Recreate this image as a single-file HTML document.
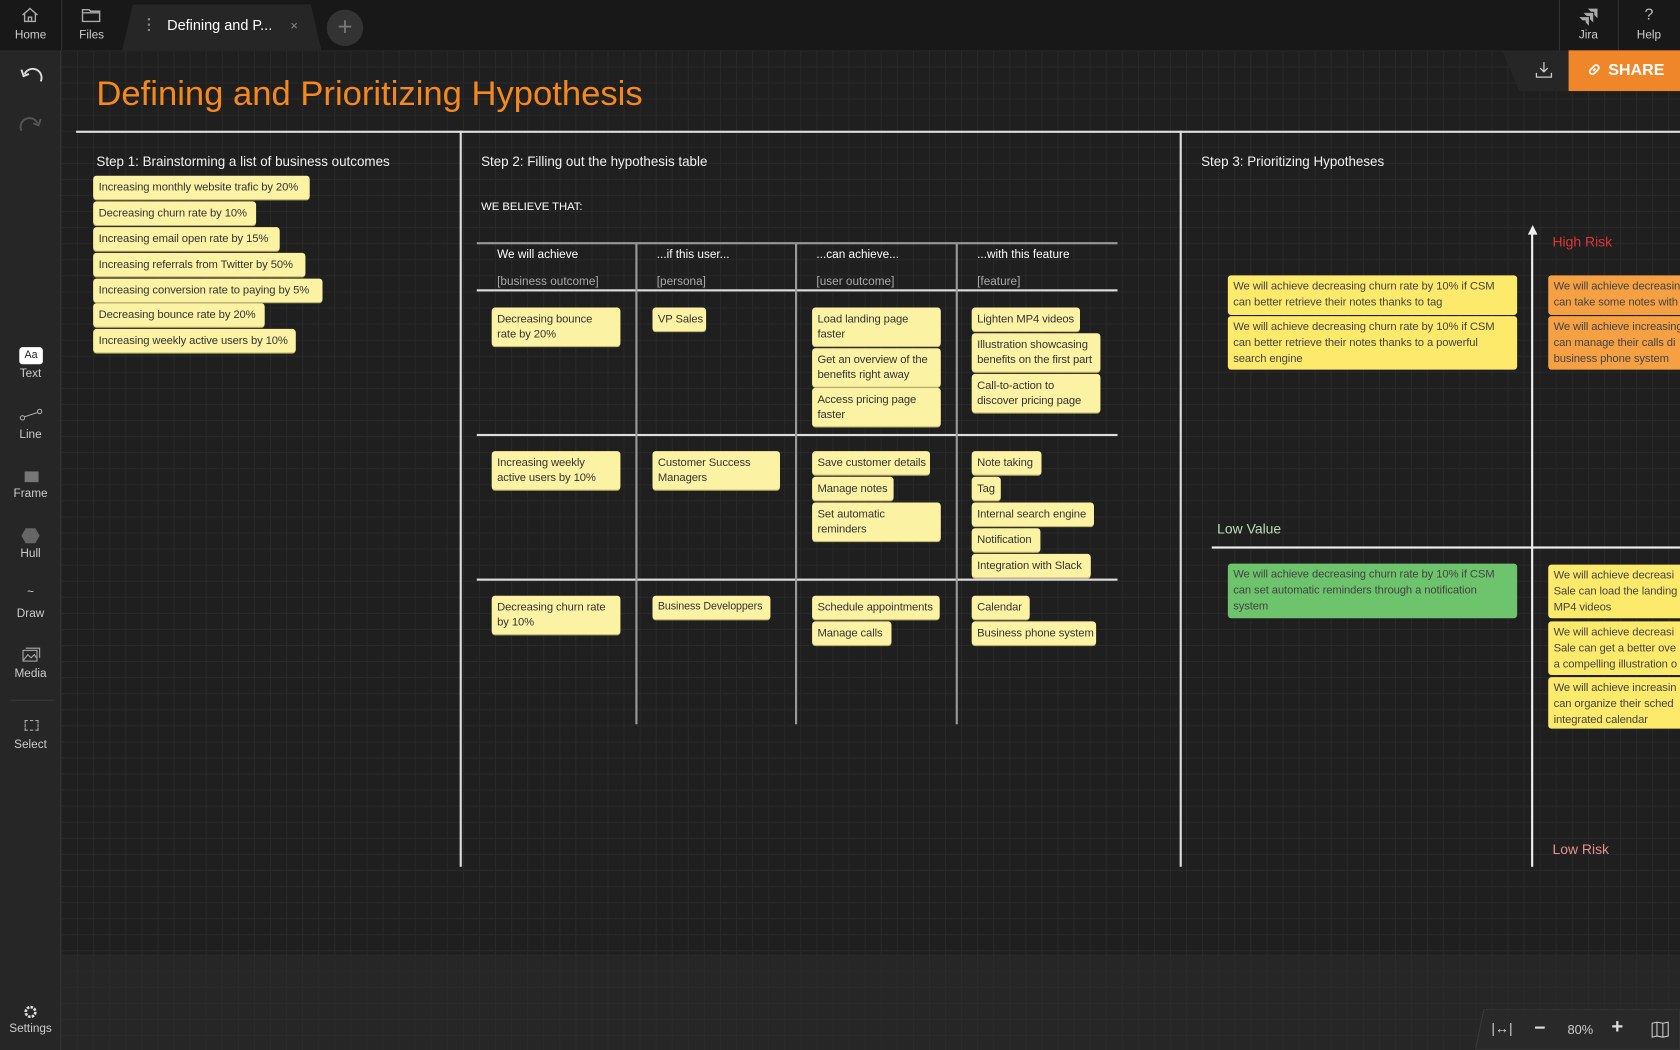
<!DOCTYPE html>
<html><head><meta charset="utf-8"><style>
*{margin:0;padding:0;box-sizing:border-box}
html,body{width:1680px;height:1050px;overflow:hidden;background:#1e1e1e;font-family:"Liberation Sans",sans-serif}
#w{position:absolute;left:0;top:0;width:1568px;height:980px;transform:scale(1.071429);transform-origin:0 0;overflow:hidden}
.a{position:absolute}
#canvas{left:57px;top:47px;width:1511px;height:844px;background-color:#1f1f1f;background-image:linear-gradient(#292929 1px,transparent 1px),linear-gradient(90deg,#292929 1px,transparent 1px);background-size:15px 15px}
#lower{left:57px;top:891px;width:1511px;height:89px;background-color:#262626;background-image:linear-gradient(#2a2a2a 1px,transparent 1px),linear-gradient(90deg,#2a2a2a 1px,transparent 1px);background-size:15px 15px}
#top{left:0;top:0;width:1568px;height:47px;background:#181818}
#side{left:0;top:47px;width:57px;height:933px;background:#262626;border-right:1px solid #333}
.lbl{position:absolute;width:57px;text-align:center;color:#ccc;font-size:11px}
.st{position:absolute;background:#fcf2a3;color:#333;font-size:10.5px;letter-spacing:-0.1px;line-height:14px;padding:4px 5px;border-radius:3px;box-shadow:0 1px 0 #b8ae6a;white-space:nowrap;overflow:hidden}
.h{position:absolute;color:#f2f2f2;font-size:12.5px}
.hl{position:absolute;height:2px;background:#ddd}
.vl{position:absolute;width:2px;background:#ddd}
.q{position:absolute;font-size:10.5px;letter-spacing:-0.1px;line-height:15px;color:#444;padding:3px 5px;border-radius:3px;width:270px;overflow:hidden;white-space:nowrap}
.y{background:#fde96a}.o{background:#f5a043}.g{background:#6dc46d}
.th{position:absolute;color:#fff;font-size:11px}
.ts{position:absolute;color:#aaa;font-size:11px}
</style></head><body><div id="w">
<div id="canvas" class="a"></div>
<div id="lower" class="a"></div>
<div id="top" class="a"></div>
<div id="side" class="a"></div>

<svg class="a" style="left:19px;top:6px" width="18" height="16" viewBox="0 0 18 16"><path d="M2 8 L9 2 L16 8 M4 6.5 V14 H14 V6.5 M7.5 14 V10 H10.5 V14" fill="none" stroke="#aaa" stroke-width="1.3"/></svg>
<div class="lbl" style="top:27px;left:0">Home</div>
<div class="a" style="left:57px;top:0;width:1px;height:47px;background:#333"></div>
<svg class="a" style="left:76px;top:7px" width="18" height="14" viewBox="0 0 18 14"><path d="M1 2 H7 L8.5 3.5 H17 V13 H1 Z M1 5 H17" fill="none" stroke="#aaa" stroke-width="1.3"/></svg>
<div class="lbl" style="top:27px;left:57px">Files</div>
<svg class="a" style="left:114px;top:4px" width="186" height="43"><path d="M10 0 H176 L186 43 H0 Z" fill="#262626"/></svg>
<div class="a" style="left:138px;top:17px;width:2px;height:2px;background:#888;box-shadow:0 5px 0 #888,0 10px 0 #888"></div>
<div class="a" style="left:156px;top:16px;color:#fff;font-size:13.5px">Defining and P...</div>
<div class="a" style="left:271px;top:17px;color:#888;font-size:12px">×</div>
<div class="a" style="left:305px;top:9px;width:34px;height:34px;border-radius:50%;background:#333;color:#777;font-size:24px;line-height:33px;text-align:center">+</div>
<div class="a" style="left:1455px;top:0;width:1px;height:47px;background:#333"></div>
<div class="a" style="left:1510px;top:0;width:1px;height:47px;background:#333"></div>
<svg class="a" style="left:1474px;top:7px" width="18" height="17" viewBox="0 0 18 17"><path d="M8 1 H17 V10 L14 7 V4 H11 Z M4 5 H13 V14 L10 11 V8 H7 Z M0 9 H9 V17 L6 14 V12 H3 Z" fill="#aaa"/></svg>
<div class="a" style="left:1455px;top:27px;width:55px;text-align:center;color:#ccc;font-size:11px">Jira</div>
<div class="a" style="left:1510px;top:5px;width:58px;text-align:center;color:#bbb;font-size:15px">?</div>
<div class="a" style="left:1510px;top:27px;width:58px;text-align:center;color:#ccc;font-size:11px">Help</div>

<svg class="a" style="left:1402px;top:47px" width="62" height="38"><path d="M0 0 H62 V38 H16 Z" fill="#262626"/></svg>
<svg class="a" style="left:1433px;top:57px" width="16" height="16" viewBox="0 0 16 16"><path d="M8 1 V10 M4.5 6.5 L8 10 L11.5 6.5 M1 11 V15 H15 V11" fill="none" stroke="#ccc" stroke-width="1.2"/></svg>
<div class="a" style="left:1464px;top:47px;width:104px;height:38px;background:#f0862a;color:#fff;font-weight:bold;font-size:15px;line-height:38px;padding-left:37px">SHARE</div>
<svg class="a" style="left:1481px;top:58px" width="14" height="14" viewBox="0 0 14 14"><path d="M6 8 L8 6 M5 5.5 L7 3.5 A2.2 2.2 0 0 1 10.5 7 L8.5 9 M9 8.5 L7 10.5 A2.2 2.2 0 0 1 3.5 7 L5.5 5" fill="none" stroke="#fff" stroke-width="1.6"/></svg>

<svg class="a" style="left:18px;top:62px" width="22" height="16" viewBox="0 0 22 16"><path d="M20 14 A8 8 0 0 0 5 7 M2 3 L4 9 L9 7" fill="none" stroke="#ddd" stroke-width="1.8"/></svg>
<svg class="a" style="left:18px;top:108px" width="22" height="16" viewBox="0 0 22 16"><path d="M2 14 A8 8 0 0 1 17 7 M20 3 L18 9 L13 7" fill="none" stroke="#555" stroke-width="1.8"/></svg>
<div class="a" style="left:18px;top:324px;width:22px;height:16px;background:#fff;border-radius:3px;color:#222;font-size:10px;line-height:16px;text-align:center">Aa</div>
<div class="lbl" style="top:343px">Text</div>
<svg class="a" style="left:18px;top:381px" width="22" height="12"><circle cx="3" cy="9" r="2" fill="none" stroke="#aaa"/><circle cx="19" cy="3" r="2" fill="none" stroke="#aaa"/><path d="M5 8 L17 4" stroke="#aaa"/></svg>
<div class="lbl" style="top:400px">Line</div>
<div class="a" style="left:23px;top:440px;width:13px;height:10px;background:#777"></div>
<div class="lbl" style="top:455px">Frame</div>
<svg class="a" style="left:20px;top:492px" width="17" height="16"><path d="M4 1 H13 L17 8 L13 15 H4 L0 8 Z" fill="#666"/></svg>
<div class="lbl" style="top:511px">Hull</div>
<div class="a" style="left:0;top:547px;width:57px;text-align:center;color:#ccc;font-size:11px">~</div>
<div class="lbl" style="top:567px">Draw</div>
<svg class="a" style="left:21px;top:604px" width="17" height="14"><rect x="0.5" y="3" width="13" height="10" fill="none" stroke="#aaa"/><path d="M3 1 H16 V10" fill="none" stroke="#aaa"/><path d="M1 12 L5 7 L8 10 L11 7 L13 10" fill="none" stroke="#aaa"/></svg>
<div class="lbl" style="top:623px">Media</div>
<div class="a" style="left:10px;top:653px;width:40px;height:1px;background:#3a3a3a"></div>
<div class="a" style="left:23px;top:672px;width:13px;height:10px;border:1px dashed #aaa"></div>
<div class="lbl" style="top:689px">Select</div>
<svg class="a" style="left:21px;top:937px" width="15" height="15" viewBox="0 0 15 15"><circle cx="7.5" cy="7.5" r="4.5" fill="none" stroke="#ddd" stroke-width="2.5" stroke-dasharray="2.4 1.1"/></svg>
<div class="lbl" style="top:954px">Settings</div>

<svg class="a" style="left:1377px;top:942px" width="191" height="38"><path d="M8 0 H191 V38 H0 Z" fill="#292929" stroke="#3a3a3a"/></svg>
<div class="a" style="left:1392px;top:952px;color:#ccc;font-size:13px">|↔|</div>
<div class="a" style="left:1432px;top:949px;color:#ddd;font-size:18px;font-weight:bold">−</div>
<div class="a" style="left:1463px;top:954px;color:#ccc;font-size:12px">80%</div>
<div class="a" style="left:1504px;top:948px;color:#ddd;font-size:19px;font-weight:bold">+</div>
<svg class="a" style="left:1541px;top:953px" width="17" height="16"><path d="M1 2 L5.5 1 L11 2 L16 1 V14 L11 15 L5.5 14 L1 15 Z M5.5 1 V14 M11 2 V15" fill="none" stroke="#ccc"/></svg>

<div class="a" style="left:90px;top:69px;color:#f5891f;font-size:32.3px">Defining and Prioritizing Hypothesis</div>
<div class="hl" style="left:71px;top:122px;width:1497px"></div>
<div class="vl" style="left:429px;top:122px;height:687px"></div>
<div class="vl" style="left:1101px;top:122px;height:687px"></div>

<div class="h" style="left:90px;top:144px">Step 1: Brainstorming a list of business outcomes</div>
<div class="st" style="left:87px;top:164px;height:22px;width:202px">Increasing monthly website trafic by 20%</div>
<div class="st" style="left:87px;top:188px;height:22px;width:152px">Decreasing churn rate by 10%</div>
<div class="st" style="left:87px;top:212px;height:22px;width:174px">Increasing email open rate by 15%</div>
<div class="st" style="left:87px;top:236px;height:22px;width:198px">Increasing referrals from Twitter by 50%</div>
<div class="st" style="left:87px;top:260px;height:22px;width:214px">Increasing conversion rate to paying by 5%</div>
<div class="st" style="left:87px;top:283px;height:22px;width:160px">Decreasing bounce rate by 20%</div>
<div class="st" style="left:87px;top:307px;height:22px;width:189px">Increasing weekly active users by 10%</div>

<div class="h" style="left:449px;top:144px">Step 2: Filling out the hypothesis table</div>
<div class="a" style="left:449px;top:187px;color:#fff;font-size:10.5px">WE BELIEVE THAT:</div>
<div class="hl" style="left:445px;top:226px;width:598px;background:#999"></div>
<div class="hl" style="left:445px;top:270px;width:598px"></div>
<div class="hl" style="left:445px;top:405px;width:598px"></div>
<div class="hl" style="left:445px;top:540px;width:598px"></div>
<div class="vl" style="left:593px;top:227px;height:449px;background:#999"></div>
<div class="vl" style="left:742px;top:227px;height:449px;background:#999"></div>
<div class="vl" style="left:892px;top:227px;height:449px;background:#999"></div>
<div class="th" style="left:464px;top:232px">We will achieve</div>
<div class="th" style="left:613px;top:232px">...if this user...</div>
<div class="th" style="left:762px;top:232px">...can achieve...</div>
<div class="th" style="left:912px;top:232px">...with this feature</div>
<div class="ts" style="left:464px;top:257px">[business outcome]</div>
<div class="ts" style="left:613px;top:257px">[persona]</div>
<div class="ts" style="left:762px;top:257px">[user outcome]</div>
<div class="ts" style="left:912px;top:257px">[feature]</div>

<div class="st" style="left:459px;top:287px;width:120px;height:36px">Decreasing bounce<br>rate by 20%</div>
<div class="st" style="left:609px;top:287px;width:50px;height:22px">VP Sales</div>
<div class="st" style="left:758px;top:287px;width:120px;height:36px">Load landing page<br>faster</div>
<div class="st" style="left:758px;top:325px;width:120px;height:36px">Get an overview of the<br>benefits right away</div>
<div class="st" style="left:758px;top:362px;width:120px;height:36px">Access pricing page<br>faster</div>
<div class="st" style="left:907px;top:287px;width:101px;height:22px">Lighten MP4 videos</div>
<div class="st" style="left:907px;top:311px;width:120px;height:36px">Illustration showcasing<br>benefits on the first part</div>
<div class="st" style="left:907px;top:349px;width:120px;height:36px">Call-to-action to<br>discover pricing page</div>

<div class="st" style="left:459px;top:421px;width:120px;height:36px">Increasing weekly<br>active users by 10%</div>
<div class="st" style="left:609px;top:421px;width:119px;height:36px">Customer Success<br>Managers</div>
<div class="st" style="left:758px;top:421px;width:110px;height:22px">Save customer details</div>
<div class="st" style="left:758px;top:445px;width:76px;height:22px">Manage notes</div>
<div class="st" style="left:758px;top:469px;width:120px;height:36px">Set automatic<br>reminders</div>
<div class="st" style="left:907px;top:421px;width:65px;height:22px">Note taking</div>
<div class="st" style="left:907px;top:445px;width:27px;height:22px">Tag</div>
<div class="st" style="left:907px;top:469px;width:114px;height:22px">Internal search engine</div>
<div class="st" style="left:907px;top:493px;width:64px;height:22px">Notification</div>
<div class="st" style="left:907px;top:517px;width:111px;height:22px">Integration with Slack</div>

<div class="st" style="left:459px;top:556px;width:120px;height:36px">Decreasing churn rate<br>by 10%</div>
<div class="st" style="left:609px;top:556px;width:110px;height:22px;font-size:10px">Business Developpers</div>
<div class="st" style="left:758px;top:556px;width:119px;height:22px">Schedule appointments</div>
<div class="st" style="left:758px;top:580px;width:74px;height:22px">Manage calls</div>
<div class="st" style="left:907px;top:556px;width:54px;height:22px">Calendar</div>
<div class="st" style="left:907px;top:580px;width:116px;height:22px">Business phone system</div>

<div class="h" style="left:1121px;top:144px">Step 3: Prioritizing Hypotheses</div>
<div class="vl" style="left:1429px;top:218px;height:591px;background:#eee"></div>
<svg class="a" style="left:1425px;top:210px" width="11" height="10"><path d="M5.5 0 L10 9 H1 Z" fill="#eee"/></svg>
<div class="hl" style="left:1131px;top:510px;width:437px;background:#eee"></div>
<div class="a" style="left:1449px;top:218px;color:#e03535;font-size:13px">High Risk</div>
<div class="a" style="left:1449px;top:785px;color:#e89090;font-size:13px">Low Risk</div>
<div class="a" style="left:1136px;top:486px;color:#bcdcbc;font-size:13px">Low Value</div>

<div class="q y" style="left:1146px;top:257px;height:37px">We will achieve decreasing churn rate by 10% if CSM<br>can better retrieve their notes thanks to tag</div>
<div class="q y" style="left:1146px;top:295px;height:50px">We will achieve decreasing churn rate by 10% if CSM<br>can better retrieve their notes thanks to a powerful<br>search engine</div>
<div class="q g" style="left:1146px;top:526px;height:51px">We will achieve decreasing churn rate by 10% if CSM<br>can set automatic reminders through a notification<br>system</div>
<div class="q o" style="left:1445px;top:257px;height:37px;width:130px">We will achieve decreasing<br>can take some notes with</div>
<div class="q o" style="left:1445px;top:295px;height:50px;width:130px">We will achieve increasing<br>can manage their calls di<br>business phone system</div>
<div class="q y" style="left:1445px;top:527px;height:50px;width:130px">We will achieve decreasi<br>Sale can load the landing<br>MP4 videos</div>
<div class="q y" style="left:1445px;top:580px;height:50px;width:130px">We will achieve decreasi<br>Sale can get a better ove<br>a compelling illustration o</div>
<div class="q y" style="left:1445px;top:632px;height:48px;width:130px">We will achieve increasin<br>can organize their sched<br>integrated calendar</div>
</div></body></html>
